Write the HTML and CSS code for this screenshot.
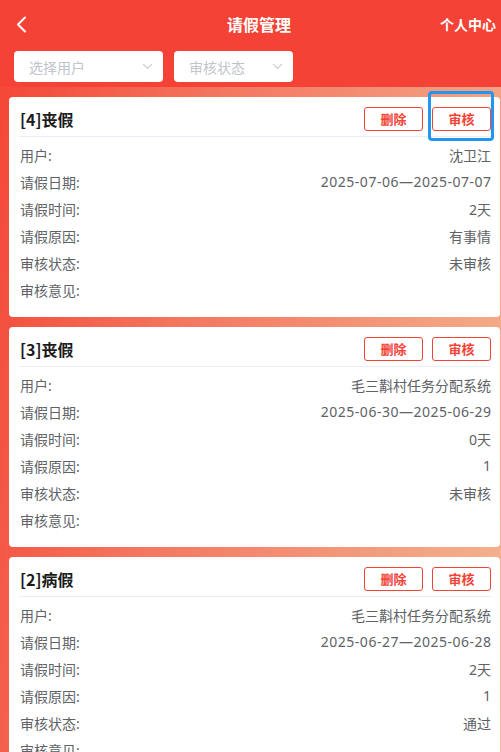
FILE: index.html
```html
<!DOCTYPE html>
<html lang="zh-CN">
<head>
<meta charset="utf-8">
<title>请假管理</title>
<link rel="stylesheet" href="styles.css">
</head>
<body>
<div class="page">
  <header class="top">
    <div class="nav">
      <span class="back"><svg width="11" height="17" viewBox="0 0 11 17"><path d="M9 1.5 L2 8.5 L9 15.5" fill="none" stroke="#fff" stroke-width="2" stroke-linecap="round" stroke-linejoin="round"/></svg></span>
      <span class="title">请假管理</span>
      <span class="mine">个人中心</span>
    </div>
    <div class="filters">
      <div class="select s1"><span>选择用户</span><svg width="11" height="7" viewBox="0 0 11 7"><path d="M1 1 L5.5 5.5 L10 1" fill="none" stroke="#c8ccd3" stroke-width="1.1"/></svg></div>
      <div class="select s2"><span>审核状态</span><svg width="11" height="7" viewBox="0 0 11 7"><path d="M1 1 L5.5 5.5 L10 1" fill="none" stroke="#c8ccd3" stroke-width="1.1"/></svg></div>
    </div>
  </header>
  <main class="list">
    <section class="card">
      <div class="card-head">
        <span class="card-title">[4]丧假</span>
        <div class="actions"><button class="btn">删除</button><button class="btn focus">审核</button></div>
      </div>
      <div class="row"><span>用户:</span><span>沈卫江</span></div>
      <div class="row"><span>请假日期:</span><span class="num">2025-07-06—2025-07-07</span></div>
      <div class="row"><span>请假时间:</span><span>2天</span></div>
      <div class="row"><span>请假原因:</span><span>有事情</span></div>
      <div class="row"><span>审核状态:</span><span>未审核</span></div>
      <div class="row"><span>审核意见:</span><span></span></div>
    </section>
    <section class="card">
      <div class="card-head">
        <span class="card-title">[3]丧假</span>
        <div class="actions"><button class="btn">删除</button><button class="btn">审核</button></div>
      </div>
      <div class="row"><span>用户:</span><span>毛三斠村任务分配系统</span></div>
      <div class="row"><span>请假日期:</span><span class="num">2025-06-30—2025-06-29</span></div>
      <div class="row"><span>请假时间:</span><span>0天</span></div>
      <div class="row"><span>请假原因:</span><span>1</span></div>
      <div class="row"><span>审核状态:</span><span>未审核</span></div>
      <div class="row"><span>审核意见:</span><span></span></div>
    </section>
    <section class="card">
      <div class="card-head">
        <span class="card-title">[2]病假</span>
        <div class="actions"><button class="btn">删除</button><button class="btn">审核</button></div>
      </div>
      <div class="row"><span>用户:</span><span>毛三斠村任务分配系统</span></div>
      <div class="row"><span>请假日期:</span><span class="num">2025-06-27—2025-06-28</span></div>
      <div class="row"><span>请假时间:</span><span>2天</span></div>
      <div class="row"><span>请假原因:</span><span>1</span></div>
      <div class="row"><span>审核状态:</span><span>通过</span></div>
      <div class="row"><span>审核意见:</span><span></span></div>
    </section>
  </main>
</div>
</body>
</html>
```
FILE: styles.css
```css
* { box-sizing: border-box; }
html, body { margin: 0; padding: 0; }
body {
  font-family: "Noto Sans CJK SC", "Noto Sans", sans-serif;
  width: 501px;
  height: 752px;
  overflow: hidden;
  background: linear-gradient(100deg, #f44435 0%, #f47760 38%, #f3b693 100%);
}
.page { min-height: 752px; }
.top {
  background: #f44336;
  height: 87px;
  padding: 0 5px 0 14px;
}
.nav {
  height: 51px;
  display: flex;
  align-items: center;
  justify-content: space-between;
  color: #fff;
  padding-bottom: 3px;
}
.back { width: 60px; display: flex; align-items: center; padding-left: 2px; }
.back svg { display: block; }
.title { font-size: 16px; font-weight: 700; margin-left: 8px; }
.mine { font-size: 14px; font-weight: 700; width: 60px; text-align: right; }
.filters { display: flex; gap: 11px; }
.select {
  height: 31px;
  background: #fff;
  border-radius: 4px;
  display: flex;
  align-items: center;
  justify-content: space-between;
  padding: 0 10px 0 15px;
  font-size: 14px;
  color: #c0c4cc;
}
.s1 { width: 149px; }
.s2 { width: 119px; }
.select span { line-height: 1; }
.list {
  padding: 10px 1px 0 9px;
  display: flex;
  flex-direction: column;
  gap: 10px;
}
.card {
  background: #fff;
  border-radius: 4px;
  padding: 10px 9px 14px 10px;
  height: 220px;
}
.card-head {
  display: flex;
  justify-content: space-between;
  align-items: center;
  height: 30px;
  padding-bottom: 5px;
  border-bottom: 1px solid #ebeef5;
  margin-bottom: 4px;
}
.card-title { font-size: 16px; font-weight: 700; color: #1a1a1a; padding-left: 1px; }
.actions { display: flex; gap: 9px; }
.btn {
  position: relative;
  width: 59px;
  height: 24px;
  border: 1px solid #f44336;
  border-radius: 3px;
  background: #fff;
  color: #f44336;
  font-family: inherit;
  font-size: 13px;
  font-weight: 700;
  padding: 0;
  line-height: 22px;
}
.focus::after {
  content: "";
  position: absolute;
  left: -5px;
  right: -4px;
  top: -17px;
  bottom: -11px;
  border: 3px solid #2196f3;
  border-radius: 4px;
}
.row {
  height: 27px;
  display: flex;
  justify-content: space-between;
  align-items: center;
  font-family: "Noto Sans", "Noto Sans CJK SC", sans-serif;
  font-size: 14px;
  color: #606266;
  padding-left: 1px;
}
.num { letter-spacing: 0.5px; margin-right: -0.5px; }
```
